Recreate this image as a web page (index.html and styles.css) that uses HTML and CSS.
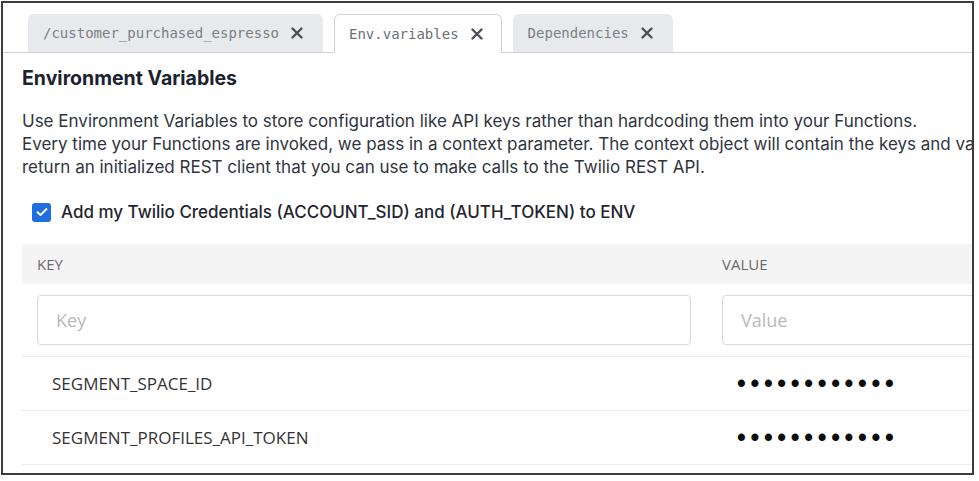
FILE: index.html
```html
<!DOCTYPE html>
<html lang="en">
<head>
<meta charset="utf-8">
<title>Environment Variables</title>
<link rel="stylesheet" href="styles.css">
</head>
<body>
<div class="frame">
  <div class="tabbar">
    <div class="tab"><span class="tab-name">/customer_purchased_espresso</span><svg class="x" width="12" height="12" viewBox="0 0 12 12"><path d="M1.5 1.5 L10.5 10.5 M10.5 1.5 L1.5 10.5" stroke="#4a5059" stroke-width="2.4" stroke-linecap="round"/></svg></div>
    <div class="tab active"><span class="tab-name">Env.variables</span><svg class="x" width="12" height="12" viewBox="0 0 12 12"><path d="M1.5 1.5 L10.5 10.5 M10.5 1.5 L1.5 10.5" stroke="#4a5059" stroke-width="2.4" stroke-linecap="round"/></svg></div>
    <div class="tab"><span class="tab-name">Dependencies</span><svg class="x" width="12" height="12" viewBox="0 0 12 12"><path d="M1.5 1.5 L10.5 10.5 M10.5 1.5 L1.5 10.5" stroke="#4a5059" stroke-width="2.4" stroke-linecap="round"/></svg></div>
  </div>
  <div class="content">
    <h1 class="title">Environment Variables</h1>
    <p class="desc">Use Environment Variables to store configuration like API keys rather than hardcoding them into your Functions.<br>Every time your Functions are invoked, we pass in a context parameter. The context object will contain the keys and values you have set here, and a function to<br>return an initialized REST client that you can use to make calls to the Twilio REST API.</p>
    <label class="check">
      <span class="box"><svg width="12" height="10" viewBox="0 0 12 10"><path d="M1.5 5.2 L4.5 8 L10.5 2" fill="none" stroke="#fff" stroke-width="2" stroke-linecap="round" stroke-linejoin="round"/></svg></span>
      <span class="check-label">Add my Twilio Credentials (ACCOUNT_SID) and (AUTH_TOKEN) to ENV</span>
    </label>
    <div class="table">
      <div class="row head">
        <div class="cell key">KEY</div>
        <div class="cell val">VALUE</div>
      </div>
      <div class="row inputs">
        <div class="cell key"><div class="input">Key</div></div>
        <div class="cell val"><div class="input">Value</div></div>
      </div>
      <div class="row data">
        <div class="cell key name">SEGMENT_SPACE_ID</div>
        <div class="cell val dots">••••••••••••</div>
      </div>
      <div class="row data">
        <div class="cell key name">SEGMENT_PROFILES_API_TOKEN</div>
        <div class="cell val dots">••••••••••••</div>
      </div>
    </div>
  </div>
</div>
</body>
</html>
```
FILE: styles.css
```css
html, body {
  margin: 0;
  padding: 0;
  background: #fff;
}
.frame {
  margin: 1px 0 0 1px;
  width: 973px;
  height: 474px;
  box-sizing: border-box;
  border: 2px solid #3c3c3c;
  overflow: hidden;
  background: #fff;
}
.tabbar {
  display: flex;
  gap: 11px;
  padding: 11px 0 0 25px;
  border-bottom: 1px solid #cfd2d6;
  height: 38px;
}
.tab {
  display: flex;
  align-items: center;
  gap: 12px;
  height: 38px;
  box-sizing: border-box;
  padding: 0 20px 0 15px;
  background: #e7e9ec;
  border-radius: 6px 6px 0 0;
  font-family: "DejaVu Sans Mono", monospace;
  font-size: 14px;
  color: #7b7f86;
  white-space: nowrap;
}
.tab.active {
  background: #fff;
  border: 1px solid #cfd2d6;
  border-bottom: none;
  height: 39px;
  padding: 0 18px 0 14px;
  color: #6b6f76;
}
.x {
  flex: none;
}
.content {
  padding: 0 0 0 19px;
}
.title {
  margin: 13px 0 0 0;
  font-family: Inter, sans-serif;
  font-size: 19.5px;
  font-weight: 700;
  line-height: 24px;
  color: #1b2230;
}
.desc {
  margin: 20px 0 0 0;
  font-family: Inter, sans-serif;
  font-size: 17px;
  line-height: 23px;
  color: #2f3540;
  white-space: nowrap;
}
.check {
  display: flex;
  align-items: center;
  gap: 10px;
  height: 24px;
  margin: 21px 0 0 10px;
}
.box {
  width: 19px;
  height: 19px;
  border-radius: 3px;
  background: #1e6ee0;
  display: flex;
  align-items: center;
  justify-content: center;
}
.check-label {
  font-family: Inter, sans-serif;
  font-size: 17px;
  font-weight: 500;
  line-height: 24px;
  color: #1f2530;
}
.table {
  margin-top: 20px;
  width: 1000px;
}
.row {
  display: flex;
}
.cell.key {
  width: 685px;
  box-sizing: border-box;
}
.cell.val {
  flex: 1;
}
.row.head {
  background: #f4f4f4;
  height: 40px;
  align-items: center;
  font-family: "Open Sans", sans-serif;
  font-size: 15px;
  color: #6a6a6a;
}
.row.head .cell {
  padding-left: 15px;
}
.row.inputs {
  padding: 11px 0;
  border-bottom: 1px solid #ececec;
}
.row.inputs .cell.key {
  padding: 0 16px 0 15px;
}
.row.inputs .cell.val {
  padding-left: 15px;
}
.input {
  height: 50px;
  box-sizing: border-box;
  border: 1px solid #d9d9d9;
  border-radius: 4px;
  padding-left: 18px;
  display: flex;
  align-items: center;
  font-family: "Open Sans", sans-serif;
  font-size: 18px;
  color: #b9b9b9;
}
.row.data {
  height: 54px;
  box-sizing: border-box;
  align-items: center;
  border-bottom: 1px solid #ececec;
}
.row.data .cell {
  padding-left: 30px;
}
.name {
  font-family: "Open Sans", sans-serif;
  font-size: 17px;
  color: #333;
}
.dots {
  font-family: "Liberation Sans", sans-serif;
  font-size: 25px;
  font-weight: bold;
  letter-spacing: 4.7px;
  color: #0c0c0c;
}
```
